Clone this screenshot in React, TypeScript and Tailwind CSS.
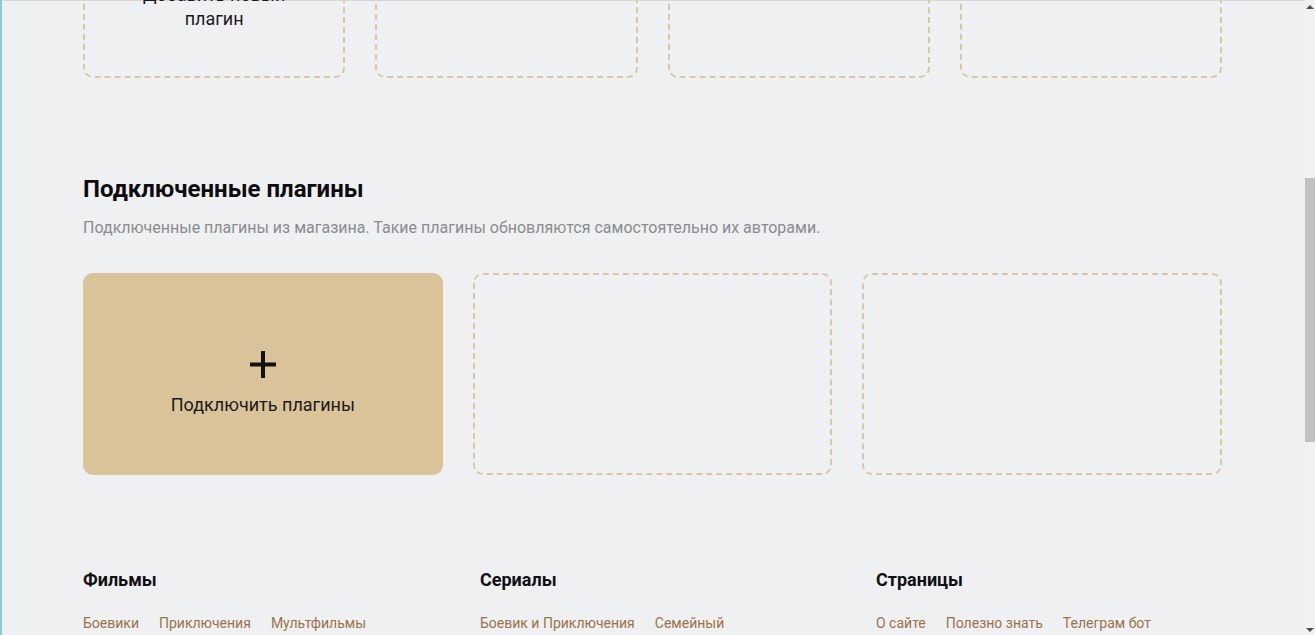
const footer = [
  { title: 'Фильмы', links: ['Боевики', 'Приключения', 'Мультфильмы'] },
  { title: 'Сериалы', links: ['Боевик и Приключения', 'Семейный'] },
  { title: 'Страницы', links: ['О сайте', 'Полезно знать', 'Телеграм бот'] }
]

const PlusMark = () => (
  <svg width="26" height="27" viewBox="0 0 26 27" className="shrink-0">
    <path d="M0 13.5H26M13 0V27" stroke="#111" strokeWidth="4" />
  </svg>
)

const DashedCard = ({ children, className = '' }: { children?: React.ReactNode; className?: string }) => (
  <div
    className={`flex flex-col items-center justify-center rounded-[10px] border-2 border-dashed border-[#dcc79e] ${className}`}
  >
    {children}
  </div>
)

const App = () => {
  return (
    <div
      className="flex h-[635px] w-[1315px] overflow-hidden bg-[#eff0f2] text-[#111]"
      style={{ fontFamily: 'Roboto, "Liberation Sans", sans-serif' }}
    >
      <div className="w-[2px] shrink-0 bg-[#8ccad9]" />
      <div className="flex-1 border-t border-[#d6d7d9]">
        <div className="-mt-[107px] w-[1139px] ml-[81px]">
          <div className="grid grid-cols-4 gap-[30px]">
            <DashedCard className="h-[184px]">
              <PlusMark />
              <div className="mt-[15px] w-[200px] text-center text-[18px] leading-[24px] text-[#1a1a1a]">
                Добавить новый плагин
              </div>
            </DashedCard>
            <DashedCard className="h-[184px]" />
            <DashedCard className="h-[184px]" />
            <DashedCard className="h-[184px]" />
          </div>

          <h2 className="mt-[96px] text-[24px] font-bold leading-[30px] text-[#0d0d0d]">
            Подключенные плагины
          </h2>
          <p className="mt-[13px] text-[16px] leading-[22px] text-[#8b8c8e]">
            Подключенные плагины из магазина. Такие плагины обновляются самостоятельно их авторами.
          </p>

          <div className="mt-[34px] grid grid-cols-3 gap-[30px]">
            <div className="flex h-[202px] flex-col items-center rounded-[10px] bg-[#d9c49a] pt-[78px]">
              <PlusMark />
              <div className="mt-[15px] text-[18px] leading-[24px] text-[#1a1a1a]">Подключить плагины</div>
            </div>
            <DashedCard className="h-[202px]" />
            <DashedCard className="h-[202px]" />
          </div>

          <div className="mt-[93px] grid grid-cols-[397px_396px_1fr]">
            {footer.map((col) => (
              <div key={col.title}>
                <div className="text-[18px] font-bold leading-[24px] text-[#111]">{col.title}</div>
                <div className="mt-[21px] flex gap-[20px] text-[14px] leading-[20px] text-[#9b7346]">
                  {col.links.map((l) => (
                    <span key={l}>{l}</span>
                  ))}
                </div>
              </div>
            ))}
          </div>
        </div>
      </div>
      <div className="flex w-[10px] shrink-0 flex-col items-center bg-[#f1f1f1]">
        <div className="mt-[5px] h-0 w-0 border-x-[4px] border-b-[4px] border-x-transparent border-b-[#505050]" />
        <div className="mt-[169px] h-[264px] w-full bg-[#c1c1c1]" />
        <div className="mt-auto mb-[3px] h-0 w-0 border-x-[4px] border-t-[4px] border-x-transparent border-t-[#505050]" />
      </div>
    </div>
  )
}

export default App
